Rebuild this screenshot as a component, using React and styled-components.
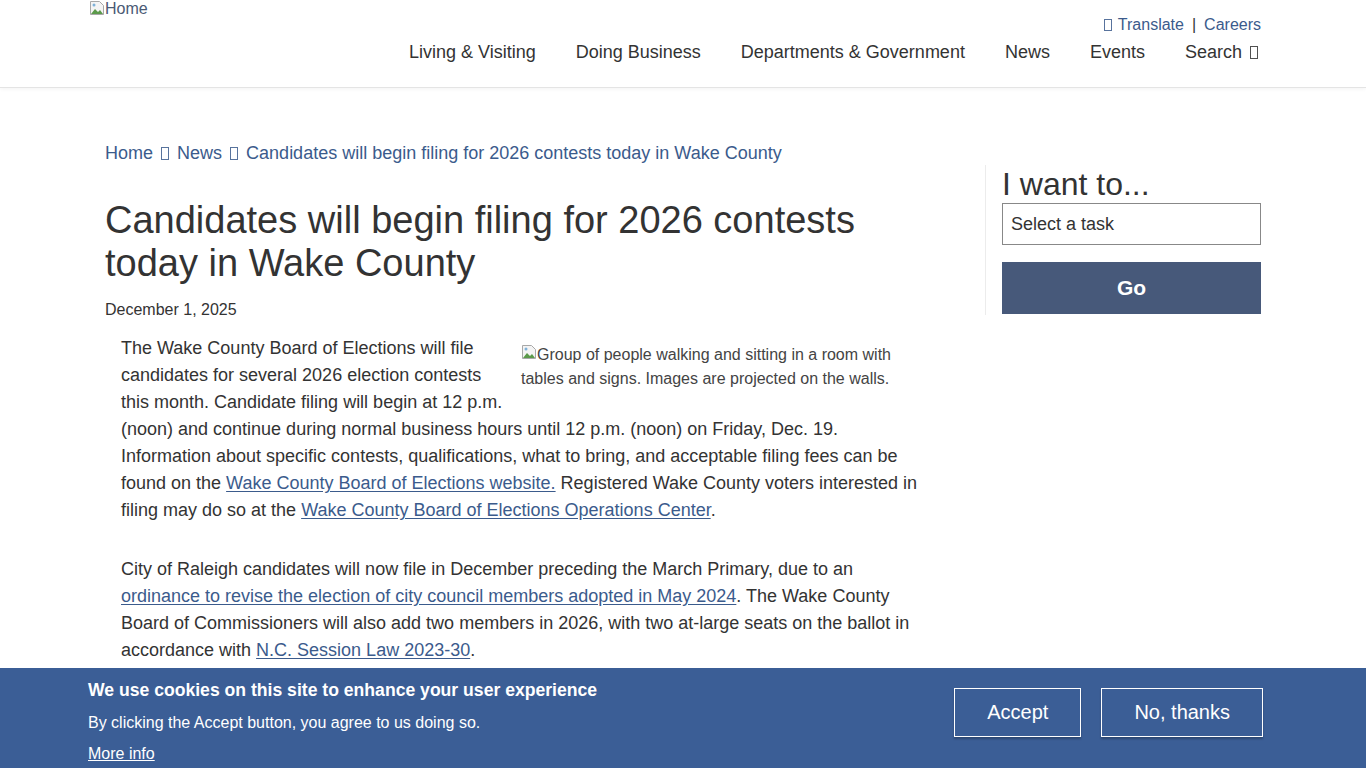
import React from 'react';
import styled, { createGlobalStyle } from 'styled-components';

const Global = createGlobalStyle`
  html, body { margin: 0; padding: 0; background: #fff; }
  body { font-family: "Liberation Sans", Arial, sans-serif; color: #333; }
  * { box-sizing: border-box; }
`;

const Header = styled.header`
  height: 88px;
  border-bottom: 1px solid #e4e4e4;
  box-shadow: 0 1px 4px rgba(0, 0, 0, 0.05);
`;

const HeaderInner = styled.div`
  width: 1188px;
  margin: 0 auto;
  padding-right: 16px;
  display: flex;
  justify-content: space-between;
  align-items: flex-start;
`;

const Logo = styled.a`
  display: flex;
  align-items: flex-start;
  font-size: 16px;
  line-height: 17px;
  color: #4a5a74;
  text-decoration: none;
`;

const HeaderRight = styled.div`
  display: flex;
  flex-direction: column;
  align-items: flex-end;
  padding-top: 15px;
`;

const Utility = styled.div`
  display: flex;
  align-items: center;
  font-size: 16px;
  line-height: 20px;
  color: #3b5b8c;
`;

const UtilLink = styled.a`
  color: #3b5b8c;
  text-decoration: none;
  display: inline-flex;
  align-items: center;
`;

const Sep = styled.span`
  margin: 0 8px;
  color: #333;
`;

const Nav = styled.nav`
  display: flex;
  gap: 40px;
  margin-top: 5px;
`;

const NavItem = styled.a`
  font-size: 18px;
  line-height: 24px;
  color: #333;
  text-decoration: none;
  display: inline-flex;
  align-items: center;
`;

const Tofu = styled.span`
  display: inline-block;
  width: ${(p) => p.$w || 8}px;
  height: ${(p) => p.$h || 12}px;
  border: 1px solid currentColor;
  margin: 0 ${(p) => p.$mr ?? 4}px 0 ${(p) => p.$ml ?? 4}px;
  vertical-align: -1px;
  opacity: 0.85;
`;

const Main = styled.div`
  width: 1188px;
  margin: 0 auto;
  padding-top: 52px;
  display: grid;
  grid-template-columns: 896px 292px;
  align-items: start;
`;

const Content = styled.main`
  padding: 0 48px 0 16px;
`;

const Crumbs = styled.nav`
  font-size: 18px;
  line-height: 27px;
  color: #3b5b8c;
`;

const Crumb = styled.a`
  color: #3b5b8c;
  text-decoration: none;
`;

const Title = styled.h1`
  margin: 32px 0 13px;
  max-width: 800px;
  font-size: 38px;
  line-height: 43.2px;
  font-weight: normal;
  color: #333;
`;

const DateLine = styled.div`
  font-size: 16px;
  line-height: 24px;
  color: #333;
`;

const Body = styled.div`
  padding: 0 16px;
  margin-top: 13px;
`;

const Para = styled.p`
  margin: 0 0 32px;
  font-size: 18px;
  line-height: 27px;
  color: #333;
`;

const Link = styled.a`
  color: #3b5b8c;
  text-decoration: underline;
  text-underline-offset: 2px;
`;

const FloatImg = styled.span`
  float: right;
  width: 400px;
  margin: 8px 0 8px 16px;
  font-size: 16px;
  line-height: 24px;
  color: #444;
`;

const Sidebar = styled.aside`
  margin-top: 25px;
  border-left: 1px solid #ececec;
  padding: 0 16px 1px 16px;
`;

const SideTitle = styled.h2`
  margin: 0;
  font-size: 32px;
  line-height: 38px;
  font-weight: normal;
  color: #333;
`;

const Select = styled.select`
  appearance: none;
  -webkit-appearance: none;
  display: block;
  width: 100%;
  height: 42px;
  border: 1px solid #888;
  border-radius: 0;
  background: #fff;
  padding: 0 8px;
  font-family: "Liberation Sans", Arial, sans-serif;
  font-size: 18px;
  color: #333;
`;

const GoButton = styled.button`
  display: block;
  width: 100%;
  height: 52px;
  margin-top: 17px;
  border: none;
  background: #47597a;
  color: #fff;
  font-family: "Liberation Sans", Arial, sans-serif;
  font-size: 21px;
  font-weight: bold;
`;

const Banner = styled.div`
  position: fixed;
  left: 0;
  right: 0;
  bottom: 0;
  height: 100px;
  background: #3b5e96;
  color: #fff;
`;

const BannerInner = styled.div`
  width: 1190px;
  margin: 0 auto;
  padding: 10px 15px 0 0;
  display: flex;
  justify-content: space-between;
  align-items: flex-start;
`;

const BannerText = styled.div`
  display: flex;
  flex-direction: column;
  align-items: flex-start;
`;

const BannerTitle = styled.h2`
  margin: 0;
  font-size: 17.6px;
  line-height: 24px;
  font-weight: bold;
`;

const BannerLine = styled.p`
  margin: 9px 0 0;
  font-size: 16px;
  line-height: 24px;
`;

const MoreInfo = styled.a`
  margin-top: 7px;
  font-size: 16px;
  line-height: 24px;
  color: #fff;
  text-decoration: underline;
`;

const Buttons = styled.div`
  display: flex;
  gap: 20px;
  margin-top: 10px;
`;

const BannerButton = styled.button`
  height: 49px;
  padding: 0 ${(p) => p.$pad}px;
  background: transparent;
  border: 1px solid #fff;
  box-shadow: 0 2px 2px rgba(0, 0, 0, 0.25);
  color: #fff;
  font-family: "Liberation Sans", Arial, sans-serif;
  font-size: 20px;
`;

const BrokenIcon = () => (
  <svg width="16" height="16" viewBox="0 0 16 16" style={{ flex: 'none' }}>
    <path d="M1.5 1.5h9l4 4v9h-13z" fill="#f4f4f4" stroke="#a8a8a8" />
    <path d="M2 14l4-5 3 3 2-2 3 4z" fill="#5b9a4a" />
    <circle cx="5" cy="5" r="1.5" fill="#7fb2d9" />
  </svg>
);

export default function App() {
  return (
    <>
      <Global />
      <Header>
        <HeaderInner>
          <Logo href="#">
            <BrokenIcon />
            Home
          </Logo>
          <HeaderRight>
            <Utility>
              <UtilLink href="#">
                <Tofu $ml={0} $mr={6} />
                Translate
              </UtilLink>
              <Sep>|</Sep>
              <UtilLink href="#">Careers</UtilLink>
            </Utility>
            <Nav>
              <NavItem href="#">Living &amp; Visiting</NavItem>
              <NavItem href="#">Doing Business</NavItem>
              <NavItem href="#">Departments &amp; Government</NavItem>
              <NavItem href="#">News</NavItem>
              <NavItem href="#">Events</NavItem>
              <NavItem href="#">
                Search
                <Tofu $ml={8} $mr={3} $h={13} />
              </NavItem>
            </Nav>
          </HeaderRight>
        </HeaderInner>
      </Header>

      <Main>
        <Content>
          <Crumbs>
            <Crumb href="#">Home</Crumb> <Tofu $ml={3} $mr={3} $h={13} /> <Crumb href="#">News</Crumb>{' '}
            <Tofu $ml={3} $mr={3} $h={13} /> <Crumb href="#">Candidates will begin filing for 2026 contests today in Wake County</Crumb>
          </Crumbs>
          <Title>Candidates will begin filing for 2026 contests today in Wake County</Title>
          <DateLine>December 1, 2025</DateLine>
          <Body>
            <Para>
              <FloatImg>
                <BrokenIcon />
                Group of people walking and sitting in a room with tables and signs. Images are projected on the walls.
              </FloatImg>
              The Wake County Board of Elections will file candidates for several 2026 election contests this month.
              Candidate filing will begin at 12 p.m. (noon) and continue during normal business hours until 12 p.m.
              (noon) on Friday, Dec. 19. Information about specific contests, qualifications, what to bring, and
              acceptable filing fees can be found on the <Link href="#">Wake County Board of Elections website.</Link>{' '}
              Registered Wake County voters interested in filing may do so at the{' '}
              <Link href="#">Wake County Board of Elections Operations Center</Link>.
            </Para>
            <Para>
              City of Raleigh candidates will now file in December preceding the March Primary, due to an{' '}
              <Link href="#">ordinance to revise the election of city council members adopted in May 2024</Link>. The
              Wake County Board of Commissioners will also add two members in 2026, with two at-large seats on the
              ballot in accordance with <Link href="#">N.C. Session Law 2023-30</Link>.
            </Para>
          </Body>
        </Content>
        <Sidebar>
          <SideTitle>I want to...</SideTitle>
          <Select defaultValue="">
            <option value="">Select a task</option>
          </Select>
          <GoButton>Go</GoButton>
        </Sidebar>
      </Main>

      <Banner>
        <BannerInner>
          <BannerText>
            <BannerTitle>We use cookies on this site to enhance your user experience</BannerTitle>
            <BannerLine>By clicking the Accept button, you agree to us doing so.</BannerLine>
            <MoreInfo href="#">More info</MoreInfo>
          </BannerText>
          <Buttons>
            <BannerButton $pad={32}>Accept</BannerButton>
            <BannerButton $pad={32}>No, thanks</BannerButton>
          </Buttons>
        </BannerInner>
      </Banner>
    </>
  );
}
